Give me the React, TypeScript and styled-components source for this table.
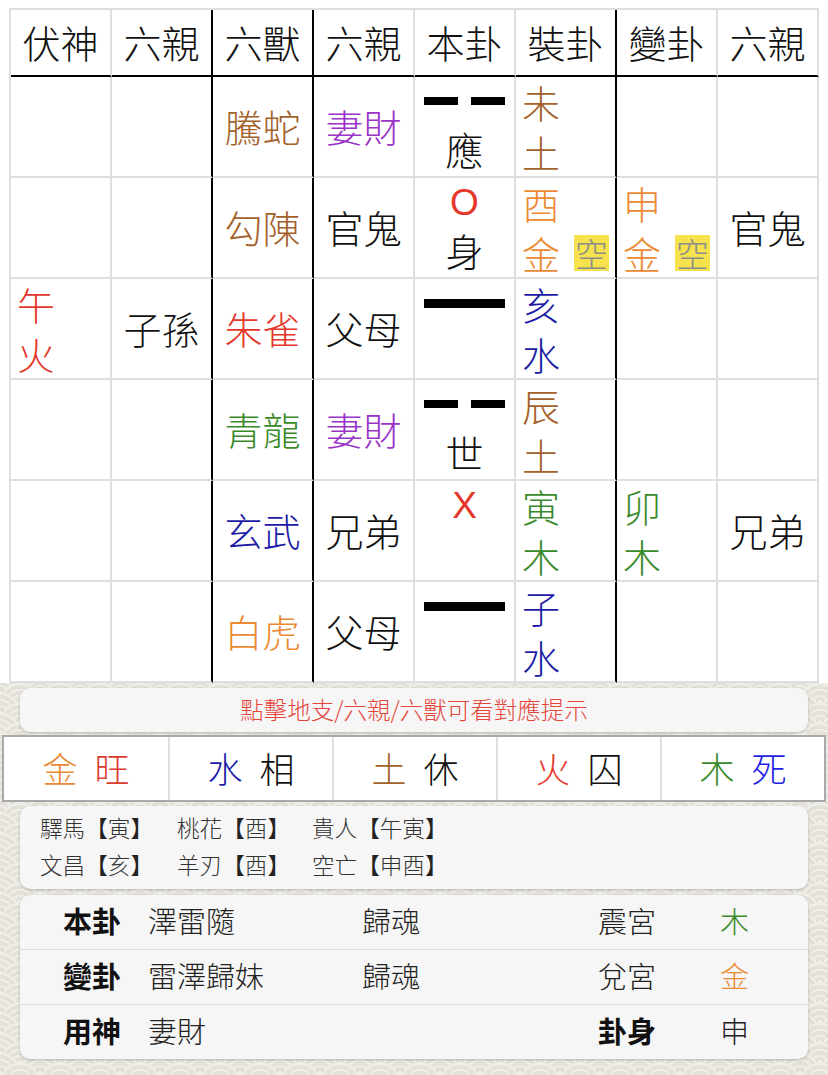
import React from 'react';
import styled, { createGlobalStyle } from 'styled-components';

const C = {
  brown: '#a3612b',
  purple: '#9a34c6',
  red: '#e5372b',
  green: '#3a8a2c',
  navy: '#1b1ba6',
  orange: '#ec8a33',
  blue: '#1f1fe6',
  black: '#111111',
};

const Global = createGlobalStyle`
  html, body { margin: 0; padding: 0; background: #fff; }
  body {
    font-family: "Noto Sans CJK TC", "Noto Sans", sans-serif;
    font-weight: 300;
    overflow: hidden;
    color: #111;
  }
`;

const Page = styled.div`
  width: 828px;
  height: 1075px;
  display: flex;
  flex-direction: column;
  overflow: hidden;
`;

const TopArea = styled.div`
  background: #fff;
  padding: 8px 9px 0 9px;
`;

const Grid = styled.div`
  box-sizing: border-box;
  width: 810px;
  display: grid;
  grid-template-columns: repeat(8, 101px);
  grid-template-rows: 67px repeat(6, 101px);
  border-top: 2px solid #dedede;
  border-left: 2px solid #dedede;
`;

const Cell = styled.div<{ $dark?: boolean; $head?: boolean }>`
  box-sizing: border-box;
  border-right: 2px solid ${(p) => (p.$dark ? '#000' : '#dedede')};
  border-bottom: 2px solid ${(p) => (p.$head ? '#000' : '#dedede')};
  min-width: 0;
`;

const HeadCell = styled(Cell)`
  display: flex;
  align-items: center;
  justify-content: center;
  padding-bottom: 3px;
  font-size: 38px;
  color: #111;
`;

const TextCell = styled(Cell)<{ $color?: string }>`
  display: flex;
  align-items: center;
  justify-content: center;
  padding-bottom: 3px;
  font-size: 38px;
  color: ${(p) => p.$color || '#111'};
`;

const StackCell = styled(Cell)<{ $color?: string }>`
  display: flex;
  flex-direction: column;
  padding: 0 6px 0 6px;
  font-size: 38px;
  line-height: 50px;
  color: ${(p) => p.$color || '#111'};
`;

const StackLine = styled.div`
  display: flex;
  justify-content: space-between;
  align-items: center;
  height: 50px;
`;

const Kong = styled.span`
  font-size: 33px;
  line-height: 36px;
  height: 36px;
  padding: 0 1px;
  background: #f6e24c;
  color: #8c8c8c;
`;

const YaoCell = styled(Cell)`
  display: flex;
  flex-direction: column;
  align-items: center;
`;

const Slot = styled.div`
  height: 48px;
  display: flex;
  align-items: center;
  justify-content: center;
`;

const YangLine = styled.div`
  width: 81px;
  height: 9px;
  background: #000;
`;

const YinLine = styled.div`
  width: 81px;
  height: 8px;
  display: flex;
  justify-content: space-between;
  &::before,
  &::after {
    content: '';
    width: 34px;
    background: #000;
  }
`;

const Mark = styled.span`
  font-family: "Liberation Sans", Arial, sans-serif;
  font-weight: 400;
  font-size: 37px;
  line-height: 1;
  color: ${C.red};
`;

const ShiText = styled.span`
  font-size: 38px;
  line-height: 44px;
  color: #111;
`;

const Bottom = styled.div`
  flex: 1;
  display: flex;
  flex-direction: column;
  background-color: #ebe8e1;
  background-image:
    radial-gradient(circle at 100% 150%, #e4e1d9 24%, #f0eee8 24%, #f0eee8 28%, #e4e1d9 28%, #e4e1d9 36%, #f0eee8 36%, #f0eee8 40%, transparent 40%, transparent),
    radial-gradient(circle at 0 150%, #e4e1d9 24%, #f0eee8 24%, #f0eee8 28%, #e4e1d9 28%, #e4e1d9 36%, #f0eee8 36%, #f0eee8 40%, transparent 40%, transparent),
    radial-gradient(circle at 50% 100%, #f0eee8 10%, #e4e1d9 10%, #e4e1d9 23%, #f0eee8 23%, #f0eee8 30%, #e4e1d9 30%, #e4e1d9 43%, #f0eee8 43%, #f0eee8 50%, #e4e1d9 50%, #e4e1d9 63%, #f0eee8 63%, #f0eee8 71%, transparent 71%, transparent),
    radial-gradient(circle at 100% 50%, #f0eee8 5%, #e4e1d9 5%, #e4e1d9 15%, #f0eee8 15%, #f0eee8 20%, #e4e1d9 20%, #e4e1d9 29%, #f0eee8 29%, #f0eee8 34%, #e4e1d9 34%, #e4e1d9 44%, #f0eee8 44%, #f0eee8 49%, transparent 49%, transparent),
    radial-gradient(circle at 0 50%, #f0eee8 5%, #e4e1d9 5%, #e4e1d9 15%, #f0eee8 15%, #f0eee8 20%, #e4e1d9 20%, #e4e1d9 29%, #f0eee8 29%, #f0eee8 34%, #e4e1d9 34%, #e4e1d9 44%, #f0eee8 44%, #f0eee8 49%, transparent 49%, transparent);
  background-size: 40px 20px;
`;

const Card = styled.div`
  margin: 0 20px;
  background: #f6f6f6;
  border-radius: 10px;
  box-shadow: 0 1px 3px rgba(0, 0, 0, 0.22);
`;

const Hint = styled(Card)`
  margin-top: 5px;
  height: 44px;
  display: flex;
  align-items: center;
  justify-content: center;
  padding-bottom: 2px;
  box-sizing: border-box;
  font-size: 23.5px;
  color: #e3453b;
`;

const WuXing = styled.div`
  box-sizing: border-box;
  margin: 3px 2px 0;
  height: 67px;
  border: 2px solid #a9a9a9;
  background: #fff;
  display: grid;
  grid-template-columns: repeat(5, 1fr);
`;

const WuCell = styled.div`
  display: flex;
  align-items: center;
  justify-content: center;
  gap: 17px;
  padding-bottom: 3px;
  font-size: 35px;
  & + & {
    border-left: 2px solid #e0e0e0;
  }
`;

const Tint = styled.span<{ $color: string }>`
  color: ${(p) => p.$color};
`;

const Info = styled(Card)`
  margin-top: 4px;
  height: 83px;
  box-sizing: border-box;
  padding: 3px 20px 0;
  font-size: 22.6px;
  color: #333;
`;

const InfoLine = styled.div`
  display: grid;
  grid-template-columns: 137px 135px auto;
  height: 37px;
  align-items: center;
  white-space: nowrap;
`;

const Bracket = styled.span`
  color: #222;
  font-weight: 400;
`;

const Details = styled(Card)`
  margin-top: 6px;
  height: 164px;
  display: flex;
  flex-direction: column;
`;

const DetailRow = styled.div`
  box-sizing: border-box;
  height: 54px;
  display: grid;
  grid-template-columns: 85px 214px 236px 122px 1fr;
  align-items: center;
  padding: 0 0 4px 43px;
  font-size: 29px;
  color: #222;
  & + & {
    height: 55px;
    border-top: 1px solid #dcdcdc;
  }
`;

const Bold = styled.span`
  font-weight: 700;
  color: #111;
`;

type Pair = [string, string];
type Stack = { a: string; b: string; color: string; kong?: boolean };
type Row = {
  fu?: Stack;
  fuQin?: string;
  beast: Pair;
  qin: Pair;
  yao: 'yin' | 'yang';
  mark?: 'O' | 'X';
  shi?: string;
  zhi: Stack;
  bian?: Stack;
  bianQin?: string;
};

const rows: Row[] = [
  { beast: ['騰蛇', C.brown], qin: ['妻財', C.purple], yao: 'yin', shi: '應', zhi: { a: '未', b: '土', color: C.brown } },
  {
    beast: ['勾陳', C.brown],
    qin: ['官鬼', C.black],
    yao: 'yang',
    mark: 'O',
    shi: '身',
    zhi: { a: '酉', b: '金', color: C.orange, kong: true },
    bian: { a: '申', b: '金', color: C.orange, kong: true },
    bianQin: '官鬼',
  },
  {
    fu: { a: '午', b: '火', color: C.red },
    fuQin: '子孫',
    beast: ['朱雀', C.red],
    qin: ['父母', C.black],
    yao: 'yang',
    zhi: { a: '亥', b: '水', color: C.navy },
  },
  { beast: ['青龍', C.green], qin: ['妻財', C.purple], yao: 'yin', shi: '世', zhi: { a: '辰', b: '土', color: C.brown } },
  {
    beast: ['玄武', C.navy],
    qin: ['兄弟', C.black],
    yao: 'yin',
    mark: 'X',
    zhi: { a: '寅', b: '木', color: C.green },
    bian: { a: '卯', b: '木', color: C.green },
    bianQin: '兄弟',
  },
  { beast: ['白虎', C.orange], qin: ['父母', C.black], yao: 'yang', zhi: { a: '子', b: '水', color: C.navy } },
];

const headers = ['伏神', '六親', '六獸', '六親', '本卦', '裝卦', '變卦', '六親'];
const darkCols = [1, 2, 5];

const StackView: React.FC<{ s?: Stack; dark?: boolean }> = ({ s, dark }) => (
  <StackCell $dark={dark} $color={s?.color}>
    {s && (
      <>
        <StackLine>{s.a}</StackLine>
        <StackLine>
          <span>{s.b}</span>
          {s.kong && <Kong>空</Kong>}
        </StackLine>
      </>
    )}
  </StackCell>
);

const wuxing: [string, string, string, string][] = [
  ['金', C.orange, '旺', '#dc3b30'],
  ['水', C.navy, '相', '#111'],
  ['土', C.brown, '休', '#111'],
  ['火', C.red, '囚', '#111'],
  ['木', C.green, '死', C.blue],
];

const infoLines: [string, string][][] = [
  [['驛馬', '寅'], ['桃花', '酉'], ['貴人', '午寅']],
  [['文昌', '亥'], ['羊刃', '酉'], ['空亡', '申酉']],
];

export default function App() {
  return (
    <Page>
      <Global />
      <TopArea>
        <Grid>
          {headers.map((h, i) => (
            <HeadCell key={'h' + i} $head $dark={darkCols.includes(i)}>
              {h}
            </HeadCell>
          ))}
          {rows.map((r, i) => (
            <React.Fragment key={i}>
              <StackView s={r.fu} />
              <TextCell $dark>{r.fuQin}</TextCell>
              <TextCell $dark $color={r.beast[1]}>{r.beast[0]}</TextCell>
              <TextCell $color={r.qin[1]}>{r.qin[0]}</TextCell>
              <YaoCell>
                <Slot>
                  {r.mark ? <Mark>{r.mark}</Mark> : r.yao === 'yang' ? <YangLine /> : <YinLine />}
                </Slot>
                <Slot>{r.shi && <ShiText>{r.shi}</ShiText>}</Slot>
              </YaoCell>
              <StackView s={r.zhi} dark />
              <StackView s={r.bian} />
              <TextCell>{r.bianQin}</TextCell>
            </React.Fragment>
          ))}
        </Grid>
      </TopArea>
      <Bottom>
        <Hint>點擊地支/六親/六獸可看對應提示</Hint>
        <WuXing>
          {wuxing.map(([e, ec, s, sc]) => (
            <WuCell key={e}>
              <Tint $color={ec}>{e}</Tint>
              <Tint $color={sc}>{s}</Tint>
            </WuCell>
          ))}
        </WuXing>
        <Info>
          {infoLines.map((line, li) => (
            <InfoLine key={li}>
              {line.map(([name, val]) => (
                <span key={name}>
                  {name}
                  <Bracket>【</Bracket>
                  {val}
                  <Bracket>】</Bracket>
                </span>
              ))}
            </InfoLine>
          ))}
        </Info>
        <Details>
          <DetailRow>
            <Bold>本卦</Bold>
            <span>澤雷隨</span>
            <span>歸魂</span>
            <span>震宮</span>
            <Tint $color={C.green}>木</Tint>
          </DetailRow>
          <DetailRow>
            <Bold>變卦</Bold>
            <span>雷澤歸妹</span>
            <span>歸魂</span>
            <span>兌宮</span>
            <Tint $color={C.orange}>金</Tint>
          </DetailRow>
          <DetailRow>
            <Bold>用神</Bold>
            <span>妻財</span>
            <span></span>
            <Bold>卦身</Bold>
            <span>申</span>
          </DetailRow>
        </Details>
      </Bottom>
    </Page>
  );
}
